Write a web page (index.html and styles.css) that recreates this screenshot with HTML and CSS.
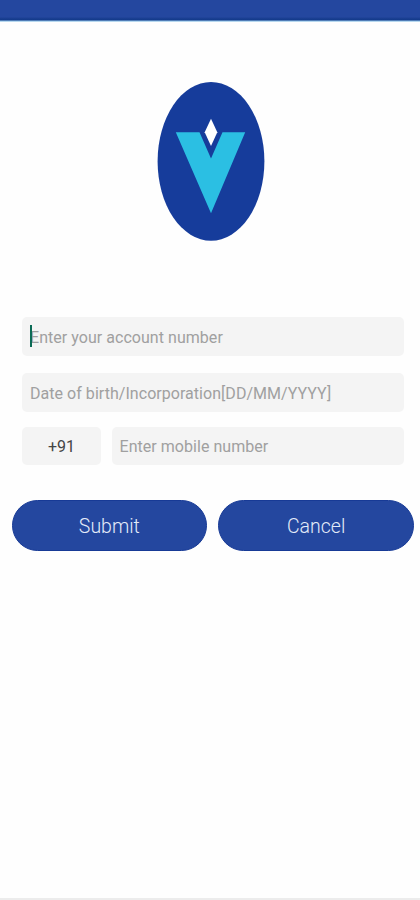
FILE: index.html
```
<!DOCTYPE html>
<html lang="en">
<head>
<meta charset="utf-8">
<title>Account registration</title>
<link rel="stylesheet" href="styles.css">
</head>
<body>
<header class="status"></header>
<main class="page">
  <svg class="logo" viewBox="0 0 108 160" role="img">
    <ellipse cx="54" cy="80.3" rx="53.4" ry="79.4" fill="#163c9b"/>
    <path d="M18.800 51.300H42.500L54 77.500 65.500 51.300H88.200L54 132.300Z" fill="#2bbfe3"/>
    <path d="M54 37.700L60.300 51.300 54 65 47.700 51.300Z" fill="#fff"/>
  </svg>
  <form class="form">
    <div class="field account"><i class="caret"></i><span>Enter your account number</span></div>
    <div class="field dob"><span>Date of birth/Incorporation[DD/MM/YYYY]</span></div>
    <div class="phone">
      <div class="field code"><span>+91</span></div>
      <div class="field mobile"><span>Enter mobile number</span></div>
    </div>
    <div class="actions">
      <button type="button">Submit</button>
      <button type="button">Cancel</button>
    </div>
  </form>
</main>
<footer class="bottom"></footer>
</body>
</html>
```
FILE: styles.css
```
* { box-sizing: border-box; }
body {
  margin: 0;
  height: 900px;
  display: flex;
  flex-direction: column;
  background: #fefefe;
  font-family: Roboto, sans-serif;
}
.status {
  height: 22px;
  background: linear-gradient(#24479f 0 17px, #1c4094 18px, #123a8a 20px, #8fc0e4 21px, #dff0fa 22px);
}
.page { flex: 1; }
.logo {
  display: block;
  width: 108px;
  height: 160px;
  margin: 59px 0 0 157px;
}
.form { padding: 76px 6px 0 11.5px; }
.field {
  position: relative;
  display: flex;
  align-items: center;
  height: 39px;
  margin: 0 10.5px;
  padding: 0 8px;
  border-radius: 5px;
  background: #f4f4f4;
  color: #a0a0a0;
  font-size: 16px;
  letter-spacing: 0.04px;
  white-space: nowrap;
}
.account,
.dob { padding-top: 2px; }
.caret {
  position: absolute;
  left: 8px;
  top: 8px;
  width: 2px;
  height: 22px;
  background: #0b6b55;
}
.dob { margin-top: 17px; }
.phone {
  display: flex;
  gap: 10.5px;
  margin: 15px 10.5px 0;
}
.phone .field { margin: 0; height: 38px; }
.phone .code {
  width: 79px;
  justify-content: center;
  color: #444;
}
.mobile { flex: 1; }
.actions {
  display: flex;
  gap: 11px;
  margin-top: 34.5px;
}
.actions button {
  flex: 1;
  height: 51.5px;
  padding: 2px 0 0;
  border: 1px solid #173a96;
  border-radius: 26px;
  background: #24479f;
  color: #e3ebf9;
  font: 300 19.5px Roboto, sans-serif;
}
.bottom { height: 2px; background: #ececec; }
```
